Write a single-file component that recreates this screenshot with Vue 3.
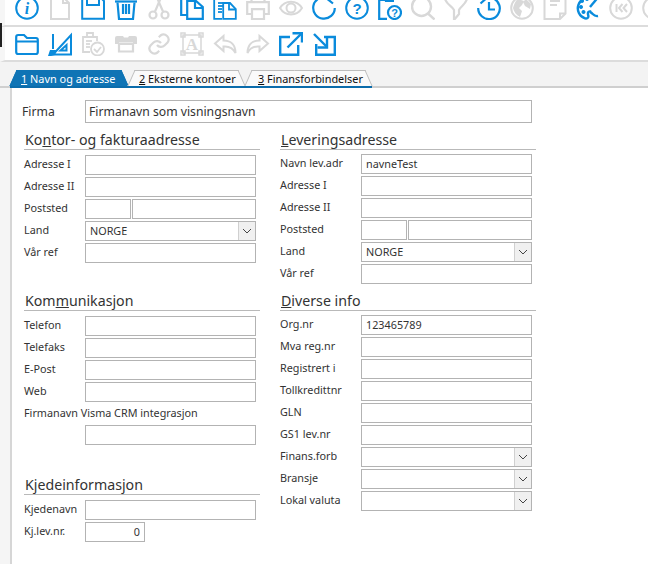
<script setup>
const B = '#0a8bdc'
const G = '#d8d8d8'
const help = (x, y, s) => ({ x, y, s, t: '?', fam: 'sans', w: 700 })
const row1 = [
  { c: B, d: [], circles: [[12, 12, 10.8]], text: [{ x: 12, y: 18, s: 16, t: 'i', fam: 'serif', w: 700, it: true }] },
  { c: G, d: ['M3 1H15L21 7V23H3Z', 'M15 1V7H21'] },
  { c: B, d: ['M1.2 1H19L23 5V22.8H1.2Z', 'M6 1V9H18V1'] },
  { c: B, d: ['M1 5.5H23', 'M3.5 6.5L5 23H19L20.5 6.5', 'M9 8V18', 'M12 8V18', 'M15 8V18'], sw: 2.2 },
  { c: G, d: ['M8 15.5L16-3', 'M16 15.5L8-3'], circles: [[6, 19, 3.5], [18, 19, 3.5]], sw: 2.2 },
  { c: B, d: ['M1.2 0V19H7', 'M1.2 0H13', 'M7.2 5H16L22.8 11V22.8H7.2Z', 'M15 5V12H22'], sw: 2.2 },
  { c: B, d: ['M1.2 3V22.8H9', 'M1.2 3H15', 'M5 0H12V3H5Z', 'M5 7H10', 'M5 10H10', 'M5 13H9', 'M5 16H9', 'M10.2 7H17L22.8 13V22.8H10.2Z', 'M16 7V13.5H22'], sw: 1.8 },
  { c: G, d: ['M5.5 6V0H18.5V6', 'M5 18H1.2V6.2H22.8V18H19', 'M6 13.2H18V23H6Z'], sw: 2.2 },
  { c: G, d: ['M1 12C6 3.5 18 3.5 23 12C18 20.5 6 20.5 1 12Z'], circles: [[12, 12, 4.5]] },
  { c: B, d: ['M22.8 12A10.8 10.8 0 1 1 15 1.5', 'M20.5-.5L16 3.5L21 7.5'], sw: 2.2 },
  { c: B, d: [], circles: [[12, 12, 10.8]], text: [{ x: 12, y: 17.5, s: 15, t: '?', fam: 'sans', w: 700 }] },
  { c: B, d: ['M9 22.8H1.2V4H8', 'M8-1V5H16'], sw: 2.2, circles: [[16.5, 16.5, 6.5]], text: [help(16.5, 20.5, 11)] },
  { c: G, d: ['M17 17.5L23.5 23.5'], circles: [[10.5, 10.5, 9.5]], sw: 2.4 },
  { c: G, d: ['M1 3C5 1 19 1 23 3C21 9 17 10 15 14V18L10 24V14C8 10 3 9 1 3Z'], sw: 2.2 },
  { c: B, d: ['M7.5 2.5A10.8 10.8 0 1 1 1.2 12', 'M4-.5L8 3.5L3.5 7.5', 'M12 6V13.5H18'], sw: 2.2 },
  { c: G, d: [], circles: [[12, 12, 10.8]], f: ['M8 3L14 5L12 9L9 12L12 15L10 21C6 19 4 16 3 12C4 8 6 4 8 3Z', 'M16 3L21 8L20 13L15 10L13 6Z'] },
  { c: G, d: ['M1.5 1H22.5V17.5L17 23H1.5Z', 'M17 23V17.5H22.5', 'M7 5H17', 'M7 9H14'], sw: 2 },
  { c: B, d: ['M16 2.2A10.6 10.6 0 1 0 9 22.4C12 23 13 21 12 18.5C11.5 16 13 15 15 15.5', 'M24-1L14 11', 'M14 16C17 17 17.5 21 22 20'], sw: 2.4, f: ['M6 7a2 2 0 1 1 .01 0Z', 'M5 13a2 2 0 1 1 .01 0Z', 'M11 5a2 2 0 1 1 .01 0Z', 'M7.5 18a2 2 0 1 1 .01 0Z'] },
  { c: G, d: ['M7.5 8V16', 'M13.5 8L10 12L13.5 16', 'M18 8L14.5 12L18 16'], circles: [[12, 12, 10.8]] },
  { c: G, d: [], circles: [[12, 12, 10.8]] }
]
const row2 = [
  { c: B, d: ['M1.2 9.5H22.8V20Q22.8 22 20.8 22H3.2Q1.2 22 1.2 20V5Q1.2 3 3.2 3H9L12 6H21Q22.8 6 22.8 8V10'], sw: 2.2 },
  { c: B, d: ['M23 3V22.5H5Z', 'M18.5 13V18.5H12.5Z', 'M5 2V17'], sw: 2, f: ['M2 18H8L7 23L3 24L0 24Z'] },
  { c: G, d: ['M9 20H2V5H16V9', 'M6 1H12V5H6Z', 'M5 9H11', 'M5 12H9', 'M5 15H9', 'M13 17L16 20L20 15'], circles: [[16.5, 17, 6.5]], sw: 1.8 },
  { c: G, d: ['M5 12H19V19.5H5Z'], sw: 2.2, f: ['M1 6Q1 4 3 4H9L10 5.5H14L15 4H21Q23 4 23 6V12H19V10.5H5V12H1Z'] },
  { c: G, d: ['M10 13a5 5 0 0 0 7.5.5l3-3a5 5 0 0 0-7-7l-1.7 1.7', 'M14 11a5 5 0 0 0-7.5-.5l-3 3a5 5 0 0 0 7 7l1.7-1.7'], sw: 2.2 },
  { c: G, d: ['M3 3H21V21H3Z', 'M1 1H5V5H1Z', 'M19 1H23V5H19Z', 'M1 19H5V23H1Z', 'M19 19H23V23H19Z'], sw: 1.5, text: [{ x: 12, y: 18, s: 17, t: 'A', fam: 'serif', w: 700 }] },
  { c: G, d: ['M10.5 4L2 11.5L10.5 19V14.5C16 14 20 16 22.5 21C22.5 13 18 8.5 10.5 8.5Z'], sw: 2 },
  { c: G, d: ['M13.5 4L22 11.5L13.5 19V14.5C8 14 4 16 1.5 21C1.5 13 6 8.5 13.5 8.5Z'], sw: 2 },
  { c: B, d: ['M11 5H1.2V22.8H19.2V13', 'M8.5 15.5L22 2', 'M13.5 1.2H23V10.5'], sw: 2.4 },
  { c: B, d: ['M12 5H22.8V22.8H4.2V12', 'M2 2L15 15', 'M15 6V15.5H5.5'], sw: 2.4 }
]
const leftA = [
  { l: 'Adresse I' }, { l: 'Adresse II' }, { l: 'Poststed', split: true },
  { l: 'Land', v: 'NORGE', combo: true }, { l: 'Vår ref' }
]
const leftB = [{ l: 'Telefon' }, { l: 'Telefaks' }, { l: 'E-Post' }, { l: 'Web' }]
const leftC = [{ l: 'Kjedenavn' }, { l: 'Kj.lev.nr.', v: '0', num: true }]
const rightA = [
  { l: 'Navn lev.adr', v: 'navneTest' }, { l: 'Adresse I' }, { l: 'Adresse II' },
  { l: 'Poststed', split: true }, { l: 'Land', v: 'NORGE', combo: true }, { l: 'Vår ref' }
]
const rightB = [
  { l: 'Org.nr', v: '123465789' }, { l: 'Mva reg.nr' }, { l: 'Registrert i' }, { l: 'Tollkredittnr' },
  { l: 'GLN' }, { l: 'GS1 lev.nr' }, { l: 'Finans.forb', combo: true }, { l: 'Bransje', combo: true }, { l: 'Lokal valuta', combo: true }
]
const sections = [
  [
    { cls: 'h1', pre: 'Ko', u: 'n', post: 'tor- og fakturaadresse', rows: leftA },
    { cls: 'h2', pre: 'Kom', u: 'm', post: 'unikasjon', rows: leftB, crm: true },
    { cls: 'h3', pre: 'Kjedeinformasjon', u: '', post: '', rows: leftC }
  ],
  [
    { cls: 'h1 r1', pre: '', u: 'L', post: 'everingsadresse', rows: rightA },
    { cls: 'h2 r2', pre: '', u: 'D', post: 'iverse info', rows: rightB }
  ]
]
const tabs = [
  { n: '1', t: 'Navn og adresse', on: true },
  { n: '2', t: 'Eksterne kontoer' },
  { n: '3', t: 'Finansforbindelser' }
]
</script>

<template>
  <div class="page">
    <div v-for="(row, ri) in [row1, row2]" :key="ri" class="bar" :class="ri ? 'bar2' : 'bar1'">
      <svg v-for="(ic, i) in row" :key="i" class="icon" viewBox="0 0 24 24" width="24" height="24"
        fill="none" :stroke="ic.c" :stroke-width="ic.sw || 2">
        <circle v-for="(c, k) in ic.circles || []" :key="k" :cx="c[0]" :cy="c[1]" :r="c[2]" fill="#fff" />
        <path v-for="(d, k) in ic.d" :key="k" :d="d" />
        <path v-for="(d, k) in ic.f || []" :key="'f' + k" :d="d" :fill="ic.c" stroke="none" />
        <text v-for="(t, k) in ic.text || []" :key="'t' + k" :x="t.x" :y="t.y" :font-size="t.s" :font-weight="t.w"
          :font-style="t.it ? 'italic' : 'normal'" :fill="ic.c" stroke="none" text-anchor="middle"
          :font-family="t.fam === 'serif' ? 'Liberation Serif, serif' : 'Liberation Sans, sans-serif'">{{ t.t }}</text>
      </svg>
    </div>
    <div class="tabs">
      <div v-for="t in tabs" :key="t.n" class="tab" :class="{ on: t.on }"><u>{{ t.n }}</u> {{ t.t }}</div>
    </div>
    <div class="content">
      <div class="body">
        <div class="firma">
          <label>Firma</label>
          <input class="field" value="Firmanavn som visningsnavn" readonly />
        </div>
        <div class="cols">
          <div v-for="(col, ci) in sections" :key="ci" class="col" :class="'col' + ci">
            <section v-for="s in col" :key="s.pre + s.post" :class="s.cls">
              <h3>{{ s.pre }}<u>{{ s.u }}</u>{{ s.post }}</h3>
              <div v-for="r in s.rows" :key="r.l" class="row">
                <label>{{ r.l }}</label>
                <div v-if="r.split" class="split"><input class="field short" readonly /><input class="field grow" readonly /></div>
                <div v-else-if="r.combo" class="combo">
                  <span>{{ r.v }}</span>
                  <i><svg viewBox="0 0 10 6" width="10" height="6" fill="none" stroke="#444" stroke-width="1"><path d="M1 1L5 5L9 1" /></svg></i>
                </div>
                <input v-else class="field grow" :class="{ num: r.num }" :value="r.v" readonly />
              </div>
              <template v-if="s.crm">
                <div class="crm">Firmanavn Visma CRM integrasjon</div>
                <div class="row"><label></label><input class="field grow" readonly /></div>
              </template>
            </section>
          </div>
        </div>
      </div>
    </div>
  </div>
</template>

<style>
html, body { margin: 0; background: #fff; overflow: hidden; }
</style>

<style scoped>
.page {
  position: relative;
  width: 648px;
  height: 564px;
  overflow: hidden;
  background: #fff;
  font-family: "Noto Sans", Tahoma, sans-serif;
  font-size: 10.8px;
  color: #333;
}
.page::before {
  content: "";
  position: absolute;
  left: 0;
  top: 23px;
  width: 2px;
  height: 24px;
  background: #222;
}
.bar {
  display: flex;
  gap: 9px;
  padding-left: 10px;
  box-sizing: border-box;
  overflow: hidden;
  border-left: 5px solid #f6f6f6;
  border-bottom: 2px solid #dcdcdc;
}
.bar1 { height: 27px; }
.bar1 .icon { margin-top: -4px; }
.bar2 { height: 35px; padding-top: 5px; }
.icon { flex: none; overflow: hidden; }
.tabs {
  height: 26px;
  box-sizing: border-box;
  background: #f3f3f3;
  display: flex;
  padding: 8px 0 0 10px;
  border-bottom: 2px solid #cfcfcf;
}
.tab {
  position: relative;
  z-index: 0;
  box-sizing: content-box;
  height: 16px;
  line-height: 17px;
  font-size: 10.9px;
  padding-left: 11px;
  width: 107px;
  color: #111;
  white-space: nowrap;
  border-bottom: 2px solid #0b6cab;
}
.tab:nth-child(2) { width: 106px; }
.tab:nth-child(3) { width: 114px; padding-left: 13px; }
.tab::before, .tab::after {
  content: "";
  position: absolute;
  z-index: -1;
  top: 0;
  bottom: 0;
  width: 55%;
  background: #fafafa;
  border-top: 1px solid #bdbdbd;
}
.tab::before { left: 3px; transform: skewX(-24deg); border-left: 1px solid #bdbdbd; }
.tab::after { right: 3px; transform: skewX(24deg); border-right: 1px solid #bdbdbd; }
.tab.on { color: #fff; }
.tab.on::before, .tab.on::after { background: #0f74b5; border-color: #0f74b5; }
.content { background: #f5f5f5; padding-left: 10px; height: 476px; }
.body {
  background: #fff;
  border-left: 2px solid #d6d6d6;
  height: 476px;
  box-sizing: border-box;
  padding: 12px 0 0 12px;
}
.firma {
  display: flex;
  align-items: center;
  height: 23px;
  font-size: 12.2px;
}
.firma label { width: 63px; flex: none; margin-left: -2px; }
.firma .field { width: 447px; height: 23px; font-size: 12.2px; padding: 0 0 1px 3px; }
.cols { display: flex; gap: 20px; }
.col { width: 236px; }
.col1 { width: 256px; }
h3 {
  margin: 0 0 5px;
  font-weight: 400;
  font-size: 14.2px;
  line-height: 19px;
  height: 19px;
  padding-left: 1px;
  border-bottom: 1px solid #b9b9b9;
  color: #333;
}
.h1 { margin-top: 7px; }
.h2 { margin-top: 28px; }
.h3 { margin-top: 30px; }
.col1 h3 { margin-bottom: 4px; }
.col1 .h2 { margin-top: 7px; }
.row {
  display: flex;
  align-items: center;
  height: 20px;
  margin-bottom: 2px;
}
.row label { width: 61px; flex: none; padding-bottom: 3px; }
.col1 .row label { width: 81px; }
.field {
  box-sizing: border-box;
  height: 20px;
  border: 1px solid #b3b3b3;
  border-radius: 0;
  outline: none;
  margin: 0;
  padding: 0 4px 1px;
  background: #fff;
  font: inherit;
  color: #333;
  min-width: 0;
  display: block;
}
.row .grow, .split, .combo { width: 171px; }
.field.num { width: 60px !important; text-align: right; }
.split { display: flex; gap: 1px; }
.split .short { width: 46px; }
.split .grow { flex: 1; width: auto !important; }
.combo {
  box-sizing: border-box;
  height: 20px;
  border: 1px solid #b3b3b3;
  display: flex;
  align-items: center;
  justify-content: space-between;
  padding-left: 4px;
}
.combo span { padding-bottom: 1px; }
.combo i {
  width: 16px;
  height: 18px;
  background: #f0f0f0;
  border-left: 1px solid #d0d0d0;
  display: flex;
  align-items: center;
  justify-content: center;
}
.crm { height: 21px; line-height: 17px; }
</style>
